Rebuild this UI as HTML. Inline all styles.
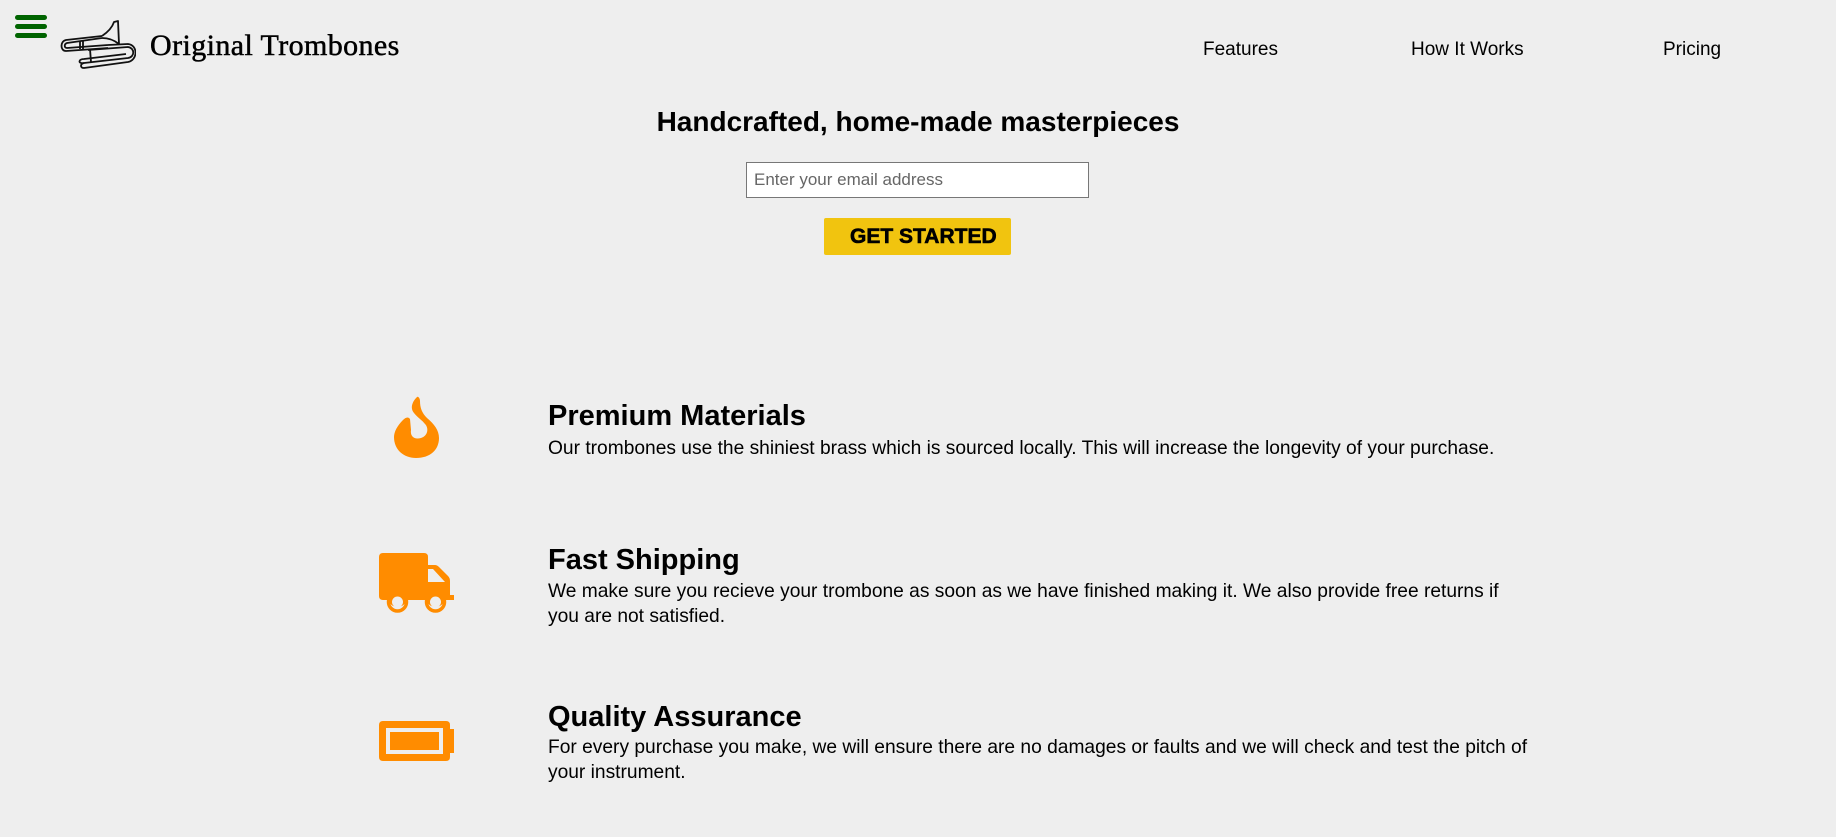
<!DOCTYPE html>
<html><head><meta charset="utf-8"><style>
html,body{margin:0;padding:0;background:#eeeeee;width:1836px;height:837px;overflow:hidden;font-family:"Liberation Sans",sans-serif;color:#000}
.a{position:absolute}
.ham span{display:block;width:32px;height:5px;border-radius:3px;background:#006400;margin-bottom:4px}
.title{font-family:"Liberation Serif",serif;font-size:30px;left:150px;top:29px;letter-spacing:0.4px;-webkit-text-stroke:0.5px #000}
.nav{font-size:19px;top:39px}
h1{position:absolute;margin:0;width:1836px;text-align:center;top:106px;font-size:28px;font-weight:bold}
input{position:absolute;left:746px;top:162px;width:343px;height:36px;box-sizing:border-box;border:1px solid #777;background:#fff;padding:0 7px;font-size:17px;font-family:"Liberation Sans",sans-serif;color:#666}
.btn{left:824px;top:218px;width:187px;height:37px;background:#f1c40f;border-radius:2px;font-weight:bold;font-size:21px;line-height:37px;box-sizing:border-box;padding-left:26px;-webkit-text-stroke:0.6px #000}
.h{font-size:29px;font-weight:bold;left:548px}
.p{font-size:19.2px;left:548px;width:990px;line-height:25px}
</style></head><body>
<div class="a ham" style="left:15px;top:15px"><span></span><span></span><span></span></div>
<svg class="a" style="left:58px;top:18px" width="78" height="52" viewBox="0 0 78 52" fill="none" stroke="#111" stroke-width="1.8" stroke-linejoin="round">
<path d="M44 18 C50 14 54 10 56 4 L60 3 L61 26 C56 22 50 20 44 20"/>
<path d="M44 18 L8 22 C2 23 2 33 8 33 L50 30"/>
<path d="M44 20 L9 25 C6 26 6 30 9 30 L50 27"/>
<path d="M22 23 V31 M25 23 V31"/>
<path d="M30 32 L70 29 C77 30 77 39 70 40 L26 45 C22 46 22 50 26 50 L70 44 C80 42 80 27 70 26 L50 27"/>
<path d="M26 45 C20 46 20 41 26 41 L68 36"/>
<path d="M32 31 L33 44"/>
</svg>
<div class="a title">Original Trombones</div>
<div class="a nav" style="left:1203px">Features</div>
<div class="a nav" style="left:1411px">How It Works</div>
<div class="a nav" style="left:1663px">Pricing</div>
<h1>Handcrafted, home-made masterpieces</h1>
<input value="Enter your email address">
<div class="a btn">GET STARTED</div>

<svg class="a" style="left:392px;top:396px" width="50" height="64" viewBox="0 0 50 64"><path fill="#ff8c00" d="M25 1 C20 6 18 12 22 17 C26 22 30 24 33 28 C37 32 36 40 29 42 C22 44 18 40 19 34 L18 23 C16 20 13 22 11 24 C5 30 2 36 2 41 C2 54 12 62 24 62 C38 62 47 54 47 42 C47 34 42 28 35 22 C30 17 28 12 28 5 C28 2 26 0 25 1 Z"/></svg>

<svg class="a" style="left:379px;top:553px" width="76" height="62" viewBox="0 0 76 62"><path fill="#ff8c00" d="M4 0 H45 Q49 0 49 4 V12 H56 Q58 12 60 14 L69 23 Q71 25 71 28 V42 H75 V47 H66 A10 10 0 0 1 47 47 H28 A10 10 0 0 1 9 47 H4 Q0 47 0 43 V4 Q0 0 4 0 Z M49 16 V29 H66 L54 16 Z"/><circle cx="18.5" cy="49" r="5.5" fill="#eee"/><circle cx="56.5" cy="49" r="5.5" fill="#eee"/><circle cx="18.5" cy="49" r="9" fill="none" stroke="#ff8c00" stroke-width="3.5"/><circle cx="56.5" cy="49" r="9" fill="none" stroke="#ff8c00" stroke-width="3.5"/></svg>

<svg class="a" style="left:379px;top:721px" width="76" height="40" viewBox="0 0 76 40"><path fill="#ff8c00" d="M4 0 H67 Q71 0 71 4 V8 H75 V32 H71 V36 Q71 40 67 40 H4 Q0 40 0 36 V4 Q0 0 4 0 Z M7 7 V33 H64 V7 Z"/><rect x="11" y="11" width="49" height="18" fill="#ff8c00"/></svg>

<div class="a h" style="top:400px">Premium Materials</div>
<div class="a p" style="top:436px">Our trombones use the shiniest brass which is sourced locally. This will increase the longevity of your purchase.</div>
<div class="a h" style="top:544px">Fast Shipping</div>
<div class="a p" style="top:579px">We make sure you recieve your trombone as soon as we have finished making it. We also provide free returns if<br>you are not satisfied.</div>
<div class="a h" style="top:701px">Quality Assurance</div>
<div class="a p" style="top:735px">For every purchase you make, we will ensure there are no damages or faults and we will check and test the pitch of<br>your instrument.</div>
</body></html>
